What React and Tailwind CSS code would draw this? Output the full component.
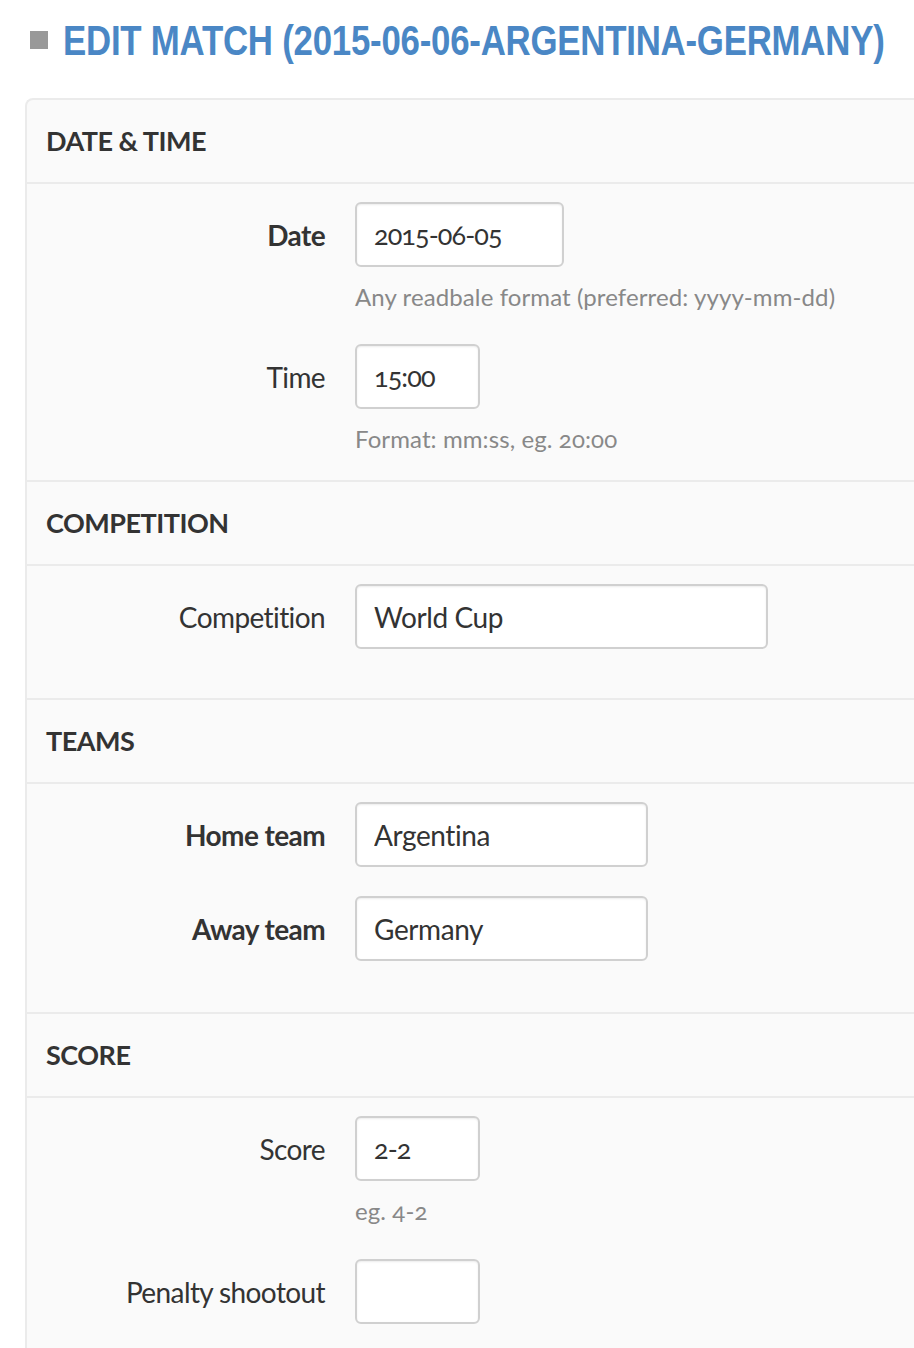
import React from "react";

const font = { fontFamily: "Lato, 'Open Sans', sans-serif" };

const Field = ({ label, bold, width, value, help, digits }) => (
  <div className="flex flex-col">
    <div className="flex items-center">
      <label
        className={`w-[298px] text-right text-[28px] text-[#333] tracking-[-0.6px] ${bold ? "font-bold" : "font-normal"}`}
      >
        {label}
      </label>
      <input
        readOnly
        value={value}
        className={`ml-[30px] h-[65px] ${width} rounded-[6px] border-2 border-[#d0d0d0] bg-white px-[17px] text-[#333] shadow-[inset_0_1px_2px_rgba(0,0,0,0.08)] outline-none ${digits ? "text-[27px] tracking-[-0.9px] [font-feature-settings:'onum']" : "text-[28px] tracking-[-0.4px]"}`}
      />
    </div>
    {help && (
      <p className="ml-[328px] mt-[16px] text-[24px] leading-[28px] text-[#888] tracking-[0.1px] [font-feature-settings:'onum']">
        {help}
      </p>
    )}
  </div>
);

const Section = ({ title, children, gap, pb }) => (
  <section>
    <h2 className="flex h-[84px] items-center px-[19px] text-[27px] font-bold text-[#333] tracking-[-0.5px] border-b-2 border-[#ebebeb]">
      {title}
    </h2>
    <div className={`flex flex-col pt-[18px] ${gap} ${pb} border-b-2 border-[#ebebeb]`}>{children}</div>
  </section>
);

export default function App() {
  return (
    <div className="min-h-screen overflow-hidden bg-white" style={font}>
      <div className="flex h-[80px] items-center pl-[30px]">
        <span className="mr-[15px] inline-block h-[18px] w-[18px] shrink-0 bg-[#999]" />
        <h1
          className="origin-left scale-x-[0.81] whitespace-nowrap text-[43px] font-bold leading-[44px] tracking-[-0.3px] text-[#4a87c5]"
          style={{ fontFamily: "'Liberation Sans', Arial, sans-serif" }}
        >
          EDIT MATCH (2015-06-06-ARGENTINA-GERMANY)
        </h1>
      </div>

      <div className="mt-[18px] ml-[25px] rounded-tl-[8px] border-l-2 border-t-2 border-[#ebebeb] bg-[#fafafa]">
        <Section title="DATE & TIME" gap="gap-[33px]" pb="pb-[27px]">
          <Field label="Date" bold digits width="w-[209px]" value="2015-06-05" help="Any readbale format (preferred: yyyy-mm-dd)" />
          <Field label="Time" digits width="w-[125px]" value="15:00" help="Format: mm:ss, eg. 20:00" />
        </Section>

        <Section title="COMPETITION" gap="gap-[29px]" pb="pb-[49px]">
          <Field label="Competition" width="w-[413px]" value="World Cup" />
        </Section>

        <Section title="TEAMS" gap="gap-[29px]" pb="pb-[51px]">
          <Field label="Home team" bold width="w-[293px]" value="Argentina" />
          <Field label="Away team" bold width="w-[293px]" value="Germany" />
        </Section>

        <Section title="SCORE" gap="gap-[34px]" pb="pb-[40px]">
          <Field label="Score" digits width="w-[125px]" value="2-2" help="eg. 4-2" />
          <Field label="Penalty shootout" width="w-[125px]" value="" />
        </Section>
      </div>
    </div>
  );
}
